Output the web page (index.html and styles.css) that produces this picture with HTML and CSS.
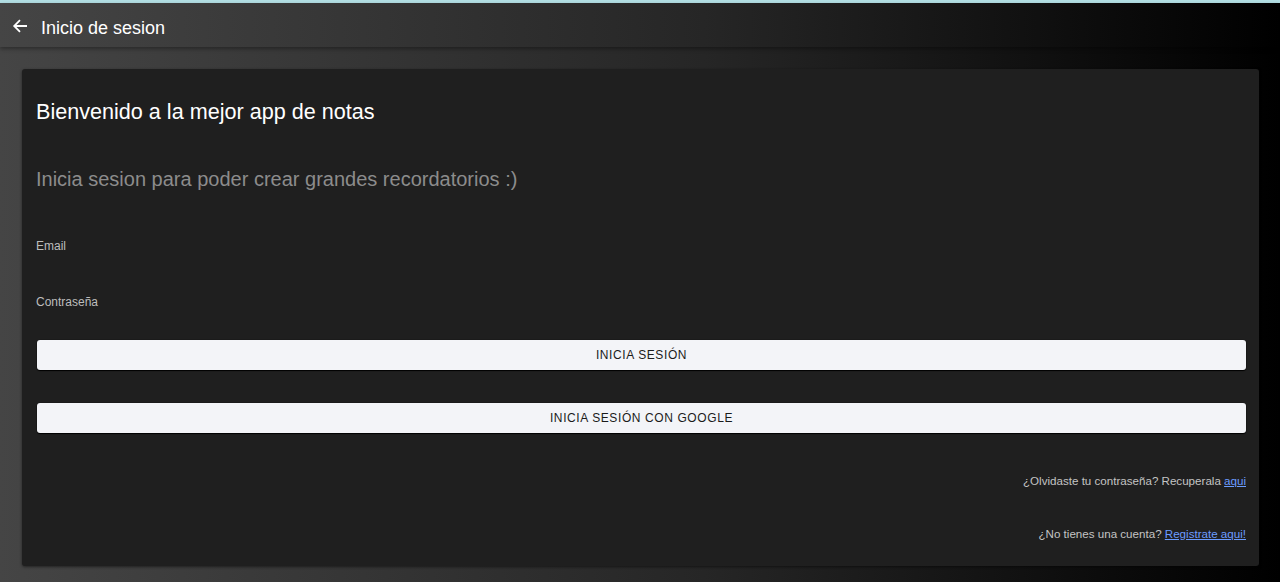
FILE: index.html
```html
<!DOCTYPE html>
<html lang="es">
<head>
<meta charset="utf-8">
<title>Inicio de sesion</title>
<link rel="stylesheet" href="styles.css">
</head>
<body>
<div class="topline"></div>
<header class="appbar">
  <svg class="back" width="16" height="16" viewBox="0 0 16 16"><path d="M15 8H2.5M8 2.2L2.2 8 8 13.8" fill="none" stroke="#fff" stroke-width="1.8"/></svg>
  <span class="appbar-title">Inicio de sesion</span>
</header>
<main class="wrap">
  <section class="card">
    <h1 class="title">Bienvenido a la mejor app de notas</h1>
    <p class="subtitle">Inicia sesion para poder crear grandes recordatorios :)</p>
    <label class="field">Email</label>
    <label class="field field-2">Contraseña</label>
    <button class="btn">INICIA SESIÓN</button>
    <button class="btn btn-2">INICIA SESIÓN CON GOOGLE</button>
    <p class="link-row">¿Olvidaste tu contraseña? Recuperala <a href="#">aqui</a></p>
    <p class="link-row link-row-2">¿No tienes una cuenta? <a href="#">Registrate aqui!</a></p>
  </section>
</main>
</body>
</html>
```
FILE: styles.css
```css
html, body {
  margin: 0;
  padding: 0;
  height: 100%;
}
body {
  font-family: "Liberation Sans", Arial, sans-serif;
  background: linear-gradient(90deg, #454545 0%, #262626 55%, #000 100%);
  color: #fff;
  overflow: hidden;
}
.topline {
  height: 3px;
  background: #b3dfe4;
}
.appbar {
  height: 44px;
  display: flex;
  align-items: center;
  padding-left: 12px;
  box-shadow: 0 2px 4px rgba(0,0,0,0.35);
  position: relative;
}
.back {
  display: block;
  margin-top: 1px;
}
.appbar-title {
  font-size: 18px;
  margin-left: 13px;
  margin-top: 6px;
}
.wrap {
  padding: 22px 21px 0 22px;
}
.card {
  background: #1f1f1f;
  border-radius: 3px;
  height: 497px;
  box-sizing: border-box;
  padding: 1px 13px 0 14px;
  box-shadow: 0 1px 3px rgba(0,0,0,0.5);
  display: flex;
  flex-direction: column;
}
.title {
  font-size: 21.6px;
  font-weight: normal;
  margin: 30px 0 0 0;
  line-height: 24px;
  color: #fff;
}
.subtitle {
  font-size: 20px;
  color: #8c8c8c;
  margin: 43px 0 0 0;
  line-height: 24px;
}
.field {
  display: block;
  font-size: 12px;
  color: #bdbdbd;
  margin-top: 48px;
  line-height: 14px;
}
.field-2 {
  margin-top: 42px;
}
.btn {
  display: block;
  margin: 31px 0 0 1px;
  height: 30px;
  width: 1209px;
  border: none;
  border-radius: 3px;
  background: #f3f4f8;
  color: #1b1b1b;
  font-family: "Liberation Sans", Arial, sans-serif;
  font-size: 12px;
  letter-spacing: 0.6px;
  box-shadow: 0 1px 1px #000, 0 0 1px #000;
  padding: 0;
}
.btn-2 {
  margin-top: 33px;
}
.link-row {
  margin: 41px 0 0 0;
  text-align: right;
  font-size: 11.6px;
  color: #c4c4c4;
  line-height: 14px;
}
.link-row-2 {
  margin-top: 39px;
}
.link-row a {
  color: #6c9cff;
  text-decoration: underline;
}
```
